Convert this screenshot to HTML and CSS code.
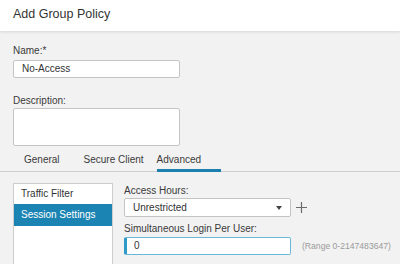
FILE: index.html
```html
<!DOCTYPE html>
<html>
<head>
<meta charset="utf-8">
<link rel="stylesheet" href="styles.css">
</head>
<body>
<div class="header"><h1 class="title">Add Group Policy</h1></div>
<div class="form">
  <label class="label label-name">Name:*</label>
  <div class="input name-input">No-Access</div>
  <label class="label label-desc">Description:</label>
  <div class="textarea"></div>
</div>
<div class="tabs">
  <div class="tab tab-general">General</div>
  <div class="tab tab-client">Secure Client</div>
  <div class="tab tab-active">Advanced</div>
</div>
<div class="content">
  <div class="nav">
    <div class="nav-item">Traffic Filter</div>
    <div class="nav-item selected">Session Settings</div>
  </div>
  <div class="fields">
    <label class="label">Access Hours:</label>
    <div class="row">
      <div class="select">Unrestricted<span class="caret"></span></div>
      <svg class="plus" width="11" height="11" viewBox="0 0 11 11"><path d="M5.5 0v11M0 5.5h11" stroke="#6b6b6b" stroke-width="1.2" fill="none"/></svg>
    </div>
    <label class="label label-login">Simultaneous Login Per User:</label>
    <div class="row">
      <div class="input login-input">0</div>
      <span class="range">(Range 0-2147483647)</span>
    </div>
  </div>
</div>
</body>
</html>
```
FILE: styles.css
```css
* { box-sizing: border-box; }
html, body { margin: 0; padding: 0; }
body {
  width: 400px;
  height: 264px;
  overflow: hidden;
  background: #f2f2f2;
  font-family: "Liberation Sans", Arial, sans-serif;
  font-size: 10px;
  color: #3a3a3a;
}
.header {
  height: 31px;
  background: #fff;
  padding: 7px 13px 0;
  box-shadow: 0 1px 3px rgba(0,0,0,0.12);
  position: relative;
}
.title {
  margin: 0;
  font-size: 12.5px;
  font-weight: normal;
  color: #333;
  line-height: 15px;
}
.form {
  padding: 14px 13px 0;
  display: flex;
  flex-direction: column;
  align-items: flex-start;
}
.label {
  display: block;
  line-height: 12px;
  color: #3a3a3a;
}
.input, .select, .textarea {
  background: #fff;
  border: 1px solid #c4c4c4;
  border-radius: 2px;
}
.name-input {
  margin-top: 3px;
  width: 167px;
  height: 18px;
  padding-left: 8px;
  line-height: 16px;
  color: #333;
}
.label-desc { margin-top: 17px; }
.textarea {
  margin-top: 1px;
  width: 167px;
  height: 38px;
}
.tabs {
  display: flex;
  margin-top: 6px;
  padding-left: 24px;
  border-bottom: 1px solid #cfcfcf;
  height: 20px;
}
.tab {
  line-height: 14px;
  padding-top: 1px;
  color: #3a3a3a;
}
.tab-general { margin-right: 24px; }
.tab-client { margin-right: 13px; }
.tab-active {
  width: 64px;
  height: 20px;
  border-bottom: 3px solid #1d7fae;
}
.content {
  display: flex;
  padding: 11px 0 0 13px;
}
.nav {
  width: 100px;
  height: 81px;
  background: #fff;
  border: 1px solid #cccccc;
  border-bottom: none;
  flex-shrink: 0;
}
.nav-item {
  height: 20px;
  line-height: 20px;
  padding-left: 7px;
  color: #333;
}
.nav-item.selected {
  height: 22px;
  line-height: 22px;
  background: #1c84b3;
  color: #fff;
}
.fields {
  margin-left: 11px;
  padding-top: 2px;
  display: flex;
  flex-direction: column;
}
.row {
  display: flex;
  align-items: center;
}
.select {
  margin-top: 1px;
  width: 167px;
  height: 19px;
  line-height: 17px;
  padding-left: 8px;
  position: relative;
  color: #333;
}
.caret {
  position: absolute;
  right: 8px;
  top: 7px;
  width: 0;
  height: 0;
  border-left: 3px solid transparent;
  border-right: 3px solid transparent;
  border-top: 4px solid #444;
}
.plus { margin-left: 5px; margin-top: 1px; }
.label-login { margin-top: 6px; }
.login-input {
  margin-top: 2px;
  width: 167px;
  height: 18px;
  line-height: 16px;
  padding-left: 7px;
  border: 1px solid #6ab8d8;
  border-left: 3px solid #2f9ac8;
  color: #333;
}
.range {
  margin-left: 11px;
  font-size: 8.6px;
  color: #9a9a9a;
  margin-top: 2px;
}
```
